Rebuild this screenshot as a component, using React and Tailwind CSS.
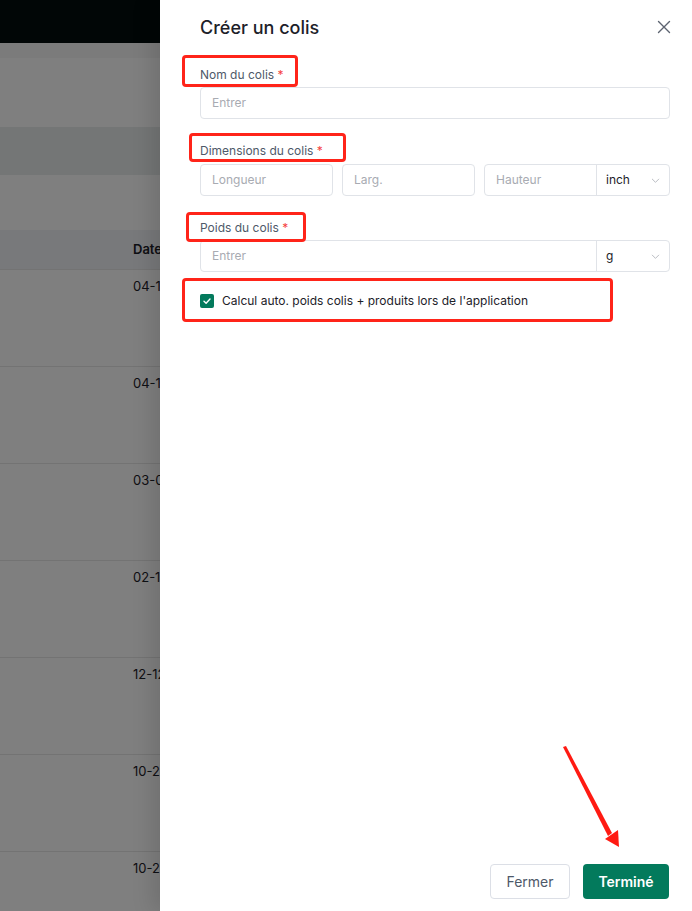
import React from "react";

const dates = ["04-14 10:21", "04-16 09:12", "03-05 14:40", "02-13 11:08", "12-12 16:30", "10-24 08:55", "10-24 08:51"];

function Chevron() {
  return (
    <svg width="11" height="11" viewBox="0 0 12 12" fill="none" stroke="#b4b7bd" strokeWidth="1" strokeLinecap="round" strokeLinejoin="round">
      <path d="M2.5 4.5 6 8l3.5-3.5" />
    </svg>
  );
}

function Label({ children }) {
  return (
    <div className="text-[12px] leading-[20px] text-[#4e5969]">
      {children} <span className="text-[#f53f3f]">*</span>
    </div>
  );
}

function RedBox({ className }) {
  return <div className={"pointer-events-none absolute rounded-[4px] border-[3px] border-[#ff2419] " + className} />;
}

export default function App() {
  return (
    <div className="relative h-[911px] w-[692px] overflow-hidden bg-white" style={{ fontFamily: "Inter, 'Noto Sans', sans-serif" }}>
      {/* Underlying page */}
      <div className="flex h-full flex-col">
        <div className="h-[43px] shrink-0 bg-[#020c0c]" />
        <div className="h-[15px] shrink-0 bg-[#f6f6f6]" />
        <div className="h-[69px] shrink-0 bg-white" />
        <div className="h-[48px] shrink-0 bg-[#e9eded]" />
        <div className="h-[55px] shrink-0 bg-white" />
        <div className="flex h-[40px] shrink-0 items-center border-b border-[#e6e6e6] bg-[#f1f3f7] pl-[133px] text-[13px] font-semibold text-[#1d2129]">
          Date
        </div>
        {dates.map((d, i) => (
          <div key={i} className="h-[97px] shrink-0 border-b border-[#e6e6e6] pl-[133px] pt-[7px] text-[13px] text-[#1d2129]">
            {d}
          </div>
        ))}
      </div>
      {/* Mask */}
      <div className="absolute inset-0 bg-black/50" />

      {/* Drawer */}
      <div className="absolute right-0 top-0 flex h-full w-[532px] flex-col bg-white shadow-[-8px_0_20px_rgba(0,0,0,0.12)]">
        <div className="flex h-[54px] shrink-0 items-center justify-between pl-[40px] pr-[21px]">
          <div className="text-[18px] font-medium text-[#1d2129]">Créer un colis</div>
          <svg width="14" height="14" viewBox="0 0 14 14" fill="none" stroke="#5c6370" strokeWidth="1.4" strokeLinecap="round">
            <path d="M1.5 1.5l11 11M12.5 1.5l-11 11" />
          </svg>
        </div>

        <div className="flex flex-col px-[40px] pr-[22px] pt-[11px]">
          <Label>Nom du colis</Label>
          <div className="mt-[2px] flex h-[32px] items-center rounded-[4px] border border-[#e0e3e8] px-[11px] text-[12px] text-[#a8abb2]">
            Entrer
          </div>

          <div className="mt-[22px]">
            <Label>Dimensions du colis</Label>
          </div>
          <div className="mt-[3px] flex h-[32px] gap-[9px]">
            <div className="flex w-[133px] items-center rounded-[4px] border border-[#e0e3e8] px-[11px] text-[12px] text-[#a8abb2]">Longueur</div>
            <div className="flex w-[133px] items-center rounded-[4px] border border-[#e0e3e8] px-[11px] text-[12px] text-[#a8abb2]">Larg.</div>
            <div className="flex flex-1 rounded-[4px] border border-[#e0e3e8]">
              <div className="flex flex-1 items-center px-[11px] text-[12px] text-[#a8abb2]">Hauteur</div>
              <div className="flex w-[73px] items-center justify-between border-l border-[#e0e3e8] pl-[9px] pr-[8px] text-[12px] text-[#1d2129]">
                inch
                <Chevron />
              </div>
            </div>
          </div>

          <div className="mt-[22px]">
            <Label>Poids du colis</Label>
          </div>
          <div className="mt-[2px] flex h-[32px] rounded-[4px] border border-[#e0e3e8]">
            <div className="flex flex-1 items-center px-[11px] text-[12px] text-[#a8abb2]">Entrer</div>
            <div className="flex w-[73px] items-center justify-between border-l border-[#e0e3e8] pl-[9px] pr-[8px] text-[12px] text-[#1d2129]">
              g
              <Chevron />
            </div>
          </div>

          <div className="mt-[19px] flex h-[20px] items-center gap-[8px]">
            <div className="flex h-[14px] w-[14px] items-center justify-center rounded-[2px] bg-[#037a5c]">
              <svg width="10" height="10" viewBox="0 0 10 10" fill="none" stroke="white" strokeWidth="1.4" strokeLinecap="round" strokeLinejoin="round">
                <path d="M2 5.2 4.1 7.2 8 3" />
              </svg>
            </div>
            <div className="text-[12px] text-[#1d2129]">Calcul auto. poids colis + produits lors de l'application</div>
          </div>
        </div>

        <div className="flex-1" />

        <div className="flex justify-end gap-[13px] pb-[12px] pr-[23px]">
          <div className="flex h-[35px] w-[80px] items-center justify-center rounded-[4px] border border-[#dcdfe6] text-[14px] text-[#4e5969]">
            Fermer
          </div>
          <div className="flex h-[35px] w-[86px] items-center justify-center rounded-[4px] bg-[#037a5c] text-[14px] font-semibold text-white">
            Terminé
          </div>
        </div>
      </div>

      {/* Annotations */}
      <RedBox className="left-[182px] top-[55px] h-[32px] w-[116px]" />
      <RedBox className="left-[189px] top-[133px] h-[29px] w-[157px]" />
      <RedBox className="left-[186px] top-[212px] h-[30px] w-[120px]" />
      <RedBox className="left-[182px] top-[278px] h-[44px] w-[431px]" />
      <svg className="pointer-events-none absolute left-0 top-0" width="692" height="911" viewBox="0 0 692 911">
        <polygon points="563,747 566,746 612,833 608,836" fill="#ff1a12" />
        <polygon points="605,839 618,830 619,847" fill="#ff1a12" />
      </svg>
    </div>
  );
}
